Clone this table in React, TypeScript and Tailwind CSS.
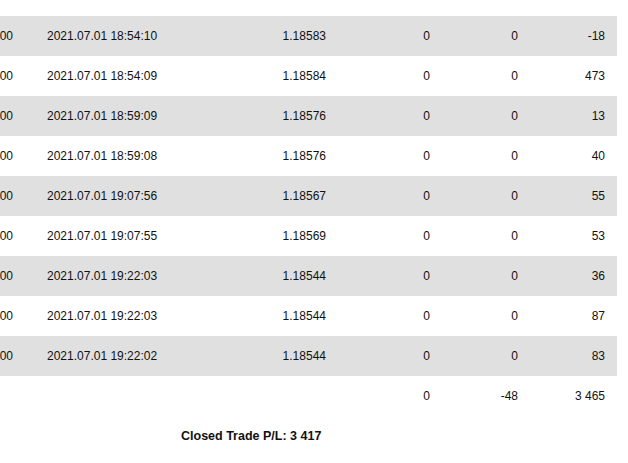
import React from 'react';

type Trade = {
  tp: string;
  closeTime: string;
  price: string;
  commission: string;
  swap: string;
  profit: string;
};

const trades: Trade[] = [
  { tp: '0.00000', closeTime: '2021.07.01 18:54:10', price: '1.18584', commission: '0', swap: '0', profit: '35' },
  { tp: '0.00000', closeTime: '2021.07.01 18:54:10', price: '1.18583', commission: '0', swap: '0', profit: '-18' },
  { tp: '0.00000', closeTime: '2021.07.01 18:54:09', price: '1.18584', commission: '0', swap: '0', profit: '473' },
  { tp: '0.00000', closeTime: '2021.07.01 18:59:09', price: '1.18576', commission: '0', swap: '0', profit: '13' },
  { tp: '0.00000', closeTime: '2021.07.01 18:59:08', price: '1.18576', commission: '0', swap: '0', profit: '40' },
  { tp: '0.00000', closeTime: '2021.07.01 19:07:56', price: '1.18567', commission: '0', swap: '0', profit: '55' },
  { tp: '0.00000', closeTime: '2021.07.01 19:07:55', price: '1.18569', commission: '0', swap: '0', profit: '53' },
  { tp: '0.00000', closeTime: '2021.07.01 19:22:03', price: '1.18544', commission: '0', swap: '0', profit: '36' },
  { tp: '0.00000', closeTime: '2021.07.01 19:22:03', price: '1.18544', commission: '0', swap: '0', profit: '87' },
  { tp: '0.00000', closeTime: '2021.07.01 19:22:02', price: '1.18544', commission: '0', swap: '0', profit: '83' },
];

function Row({ trade, shaded }: { trade: Trade; shaded: boolean }) {
  return (
    <div className={`flex h-[40px] items-center ${shaded ? 'bg-[#e0e0e0]' : 'bg-white'}`}>
      <div className="w-[73px] text-right">{trade.tp}</div>
      <div className="w-[187px] pl-[34px] text-left">{trade.closeTime}</div>
      <div className="w-[126px] text-right">{trade.price}</div>
      <div className="w-[104px] text-right">{trade.commission}</div>
      <div className="w-[88px] text-right">{trade.swap}</div>
      <div className="w-[99px] pr-[12px] text-right">{trade.profit}</div>
    </div>
  );
}

export default function App() {
  return (
    <div className="w-[628px] h-[463px] overflow-hidden bg-white">
      <div
        className="ml-[-60px] mt-[-24px] w-[677px] text-[12px] text-[#111] whitespace-nowrap"
        style={{ fontFamily: '"Liberation Sans", Arial, sans-serif' }}
      >
        {trades.map((trade, i) => (
          <Row key={i} trade={trade} shaded={i % 2 === 1} />
        ))}

        <div className="flex h-[40px] items-center bg-white">
          <div className="w-[73px]"></div>
          <div className="w-[187px]"></div>
          <div className="w-[126px]"></div>
          <div className="w-[104px] text-right">0</div>
          <div className="w-[88px] text-right">-48</div>
          <div className="w-[99px] pr-[12px] text-right">3 465</div>
        </div>

        <div className="flex h-[40px] items-center pl-[241px]">
          <span className="text-[12.5px] font-bold">Closed Trade P/L: 3 417</span>
        </div>
      </div>
    </div>
  );
}
